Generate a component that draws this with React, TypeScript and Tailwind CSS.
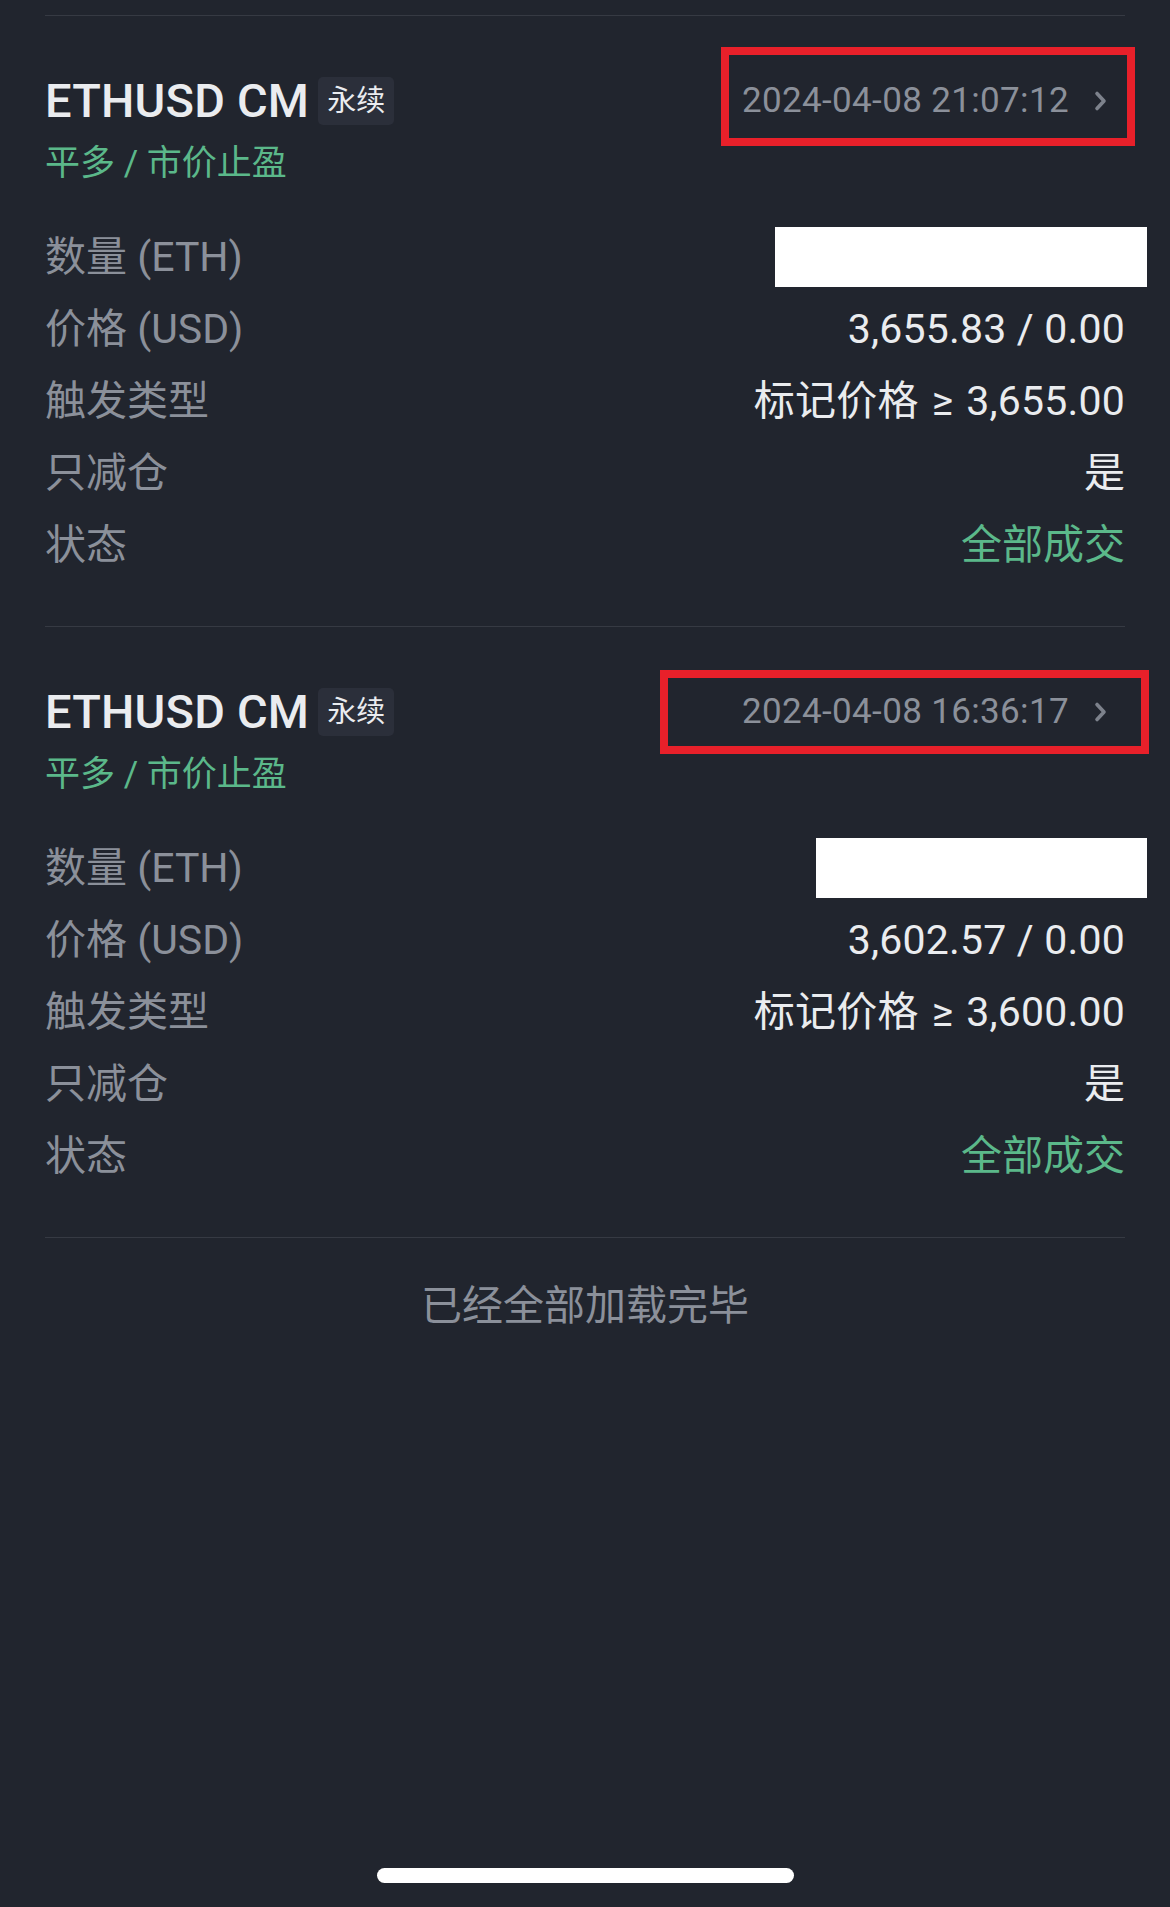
import { Fragment } from 'react';

type Order = {
    time: string;
    price: string;
    trigger: string;
    redactWidth: string;
    markBox: string;
};

const orders: Order[] = [
    {
        time: '2024-04-08 21:07:12',
        price: '3,655.83 / 0.00',
        trigger: '3,655.00',
        redactWidth: 'w-[372px]',
        markBox: 'left-[676px] top-[31px] w-[414px] h-[99px]',
    },
    {
        time: '2024-04-08 16:36:17',
        price: '3,602.57 / 0.00',
        trigger: '3,600.00',
        redactWidth: 'w-[331px]',
        markBox: 'left-[615px] top-[43px] w-[489px] h-[84px]',
    },
];

function ChevronRight() {
    return (
        <svg width="16" height="22" viewBox="0 0 16 22" className="ml-[24px]">
            <path d="M4 3.5 L11 11 L4 18.5" fill="none" stroke="#7d828c" strokeWidth="3.6" strokeLinecap="round" strokeLinejoin="round" />
        </svg>
    );
}

function OrderCard({ order }: { order: Order }) {
    const rows: { label: string; value: React.ReactNode }[] = [
        { label: '数量 (ETH)', value: <div className={`h-[60px] bg-white mr-[-22px] ${order.redactWidth}`} /> },
        { label: '价格 (USD)', value: <span className="text-[#eaecef] tracking-[0.2px]">{order.price}</span> },
        {
            label: '触发类型',
            value: (
                <span className="text-[#eaecef] tracking-[0.2px]">
                    标记价格<span className="mx-[13px]">≥</span>{order.trigger}
                </span>
            ),
        },
        { label: '只减仓', value: <span className="text-[#eaecef]">是</span> },
        { label: '状态', value: <span className="text-[#5bb88a]">全部成交</span> },
    ];

    return (
        <div className="relative border-t border-[#363a43] pt-[55px] pb-[45px]">
            <div className="flex justify-between items-start">
                <div>
                    <div className="flex items-center h-[60px]">
                        <span className="text-[47px] leading-[60px] font-medium text-[#eaecef] tracking-[0.2px]">ETHUSD CM</span>
                        <span className="ml-[9px] h-[48px] px-[9px] rounded-[5px] bg-[#2b2f3a] text-[29px] leading-[48px] text-[#eaecef]">永续</span>
                    </div>
                    <div className="mt-[4px] text-[35px] leading-[58px] text-[#5bb88a]">平多 / 市价止盈</div>
                </div>
                <div className="flex items-center h-[60px] mr-[16px]">
                    <span className="text-[35px] leading-[60px] text-[#8b909a] tracking-[0.35px]">{order.time}</span>
                    <ChevronRight />
                </div>
            </div>
            <div className="mt-[28px] flex flex-col">
                {rows.map((r) => (
                    <Fragment key={r.label}>
                        <div className="flex justify-between items-center h-[72px] text-[41px] leading-[72px]">
                            <span className="text-[#8b909a]">{r.label}</span>
                            {r.value}
                        </div>
                    </Fragment>
                ))}
            </div>
            <div className={`absolute border-[8px] border-[#e8202a] ${order.markBox}`} />
        </div>
    );
}

export default function App() {
    return (
        <div
            className="min-h-[1907px] bg-[#21252e] relative overflow-hidden"
            style={{ fontFamily: "Roboto, 'Noto Sans CJK SC', sans-serif" }}
        >
            <div className="px-[45px] pt-[15px]">
                {orders.map((o) => (
                    <OrderCard key={o.time} order={o} />
                ))}
                <div className="border-t border-[#363a43] pt-[38px] text-center text-[41px] leading-[60px] text-[#8b909a]">
                    已经全部加载完毕
                </div>
            </div>
            <div className="absolute left-[377px] top-[1868px] w-[417px] h-[15px] rounded-full bg-white" />
        </div>
    );
}
